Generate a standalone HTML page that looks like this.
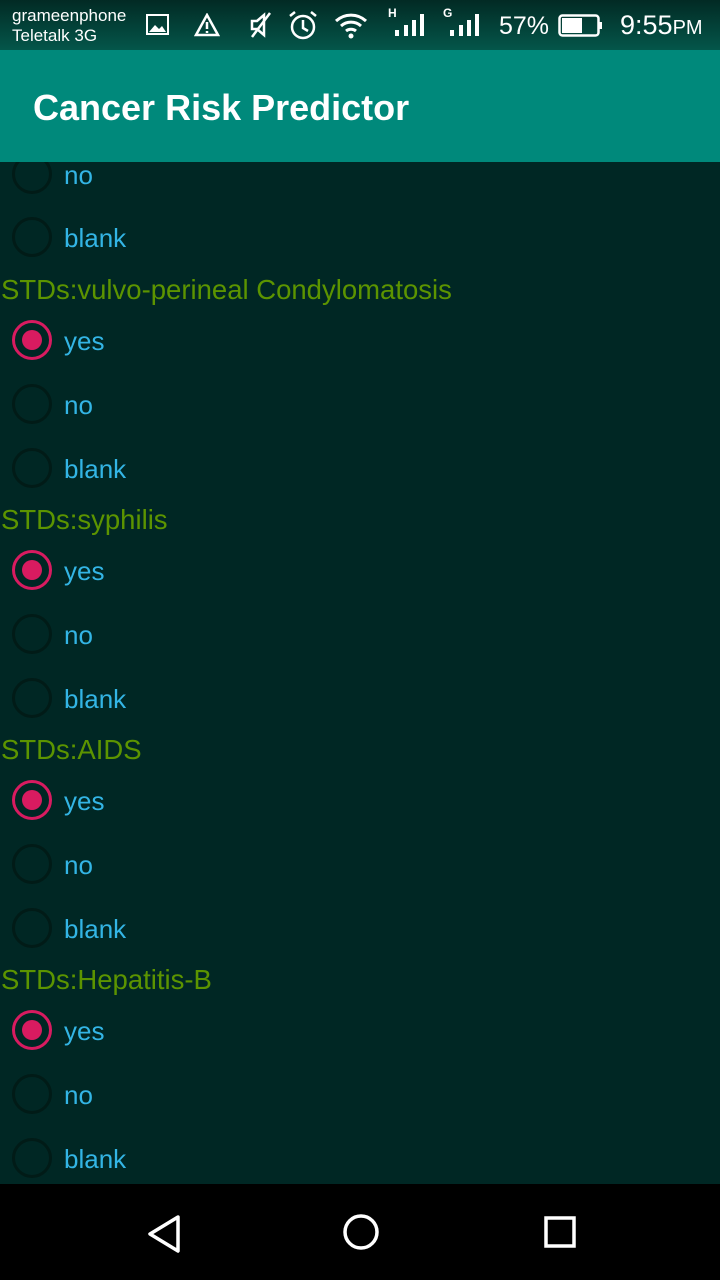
<!DOCTYPE html><html><head><style>
body{margin:0;width:720px;height:1280px;background:#002724;font-family:"Liberation Sans",sans-serif;position:relative;overflow:hidden}
.sb{position:absolute;top:0;left:0;width:720px;height:50px;background:linear-gradient(#022a24,#04564a);color:#fff}
.ab{position:absolute;top:50px;left:0;width:720px;height:112px;background:#00897b;color:#fff;font-size:36px;font-weight:bold}
.ab span{position:absolute;left:33px;top:37px}
.r{position:absolute;left:0;height:40px;width:720px}
.c{position:absolute;left:12px;top:0;width:34px;height:34px;border:3px solid #011b17;border-radius:50%}
.c.on{border-color:#d81b60}
.c.on::after{content:"";position:absolute;left:7px;top:7px;width:20px;height:20px;border-radius:50%;background:#d81b60}
.t{position:absolute;left:64px;top:6px;font-size:26px;color:#33b5e5}
.h{position:absolute;left:1px;font-size:27.5px;color:#5c9400}
.nav{position:absolute;top:1184px;left:0;width:720px;height:96px;background:#000}
</style></head><body>
<div class="sb">
<div style="position:absolute;left:12px;top:6px;font-size:17px;line-height:20px">grameenphone<br>Teletalk 3G</div>
<svg style="position:absolute;left:146px;top:14px" width="24" height="22"><rect x="1" y="1" width="21" height="19" fill="none" stroke="#fff" stroke-width="2"/><path d="M3 18 L9 11 L13 15 L16 12 L20 18Z" fill="#fff"/></svg>
<svg style="position:absolute;left:194px;top:13px" width="26" height="24"><path d="M13 2 L24 22 H2Z" fill="none" stroke="#fff" stroke-width="2.5"/><path d="M13 9v7M13 18v2" stroke="#fff" stroke-width="2.5"/></svg>
<svg style="position:absolute;left:248px;top:11px" width="26" height="28"><path d="M4 10h5l7-6v20l-7-6H4z" fill="none" stroke="#fff" stroke-width="2.5"/><path d="M22 2L4 26" stroke="#fff" stroke-width="2.5"/></svg>
<svg style="position:absolute;left:287px;top:9px" width="32" height="32"><circle cx="16" cy="18" r="11" fill="none" stroke="#fff" stroke-width="2.5"/><path d="M16 11v8l5 3M3 7l5-4M29 7l-5-4" stroke="#fff" stroke-width="2.5" fill="none"/></svg>
<svg style="position:absolute;left:334px;top:12px" width="34" height="28"><path d="M2 9a22 22 0 0 1 30 0M7 14a15 15 0 0 1 20 0M12 19a8 8 0 0 1 10 0" stroke="#fff" stroke-width="3" fill="none"/><circle cx="17" cy="24" r="2.5" fill="#fff"/></svg>
<div style="position:absolute;left:388px;top:6px;font-size:12px;font-weight:bold">H</div>
<svg style="position:absolute;left:395px;top:14px" width="32" height="24"><rect x="0" y="16" width="4" height="6" fill="#fff"/><rect x="9" y="11" width="4" height="11" fill="#fff"/><rect x="17" y="6" width="4" height="16" fill="#fff"/><rect x="25" y="0" width="4" height="22" fill="#fff"/></svg>
<div style="position:absolute;left:443px;top:6px;font-size:12px;font-weight:bold">G</div>
<svg style="position:absolute;left:450px;top:14px" width="32" height="24"><rect x="0" y="16" width="4" height="6" fill="#fff"/><rect x="9" y="11" width="4" height="11" fill="#fff"/><rect x="17" y="6" width="4" height="16" fill="#fff"/><rect x="25" y="0" width="4" height="22" fill="#fff"/></svg>
<div style="position:absolute;left:499px;top:12px;font-size:25px">57%</div>
<svg style="position:absolute;left:558px;top:14px" width="46" height="24"><rect x="1.5" y="1.5" width="39" height="20" rx="3" fill="none" stroke="#fff" stroke-width="2.5"/><rect x="4" y="4" width="20" height="15" fill="#fff"/><rect x="41" y="8" width="3" height="7" fill="#fff"/></svg>
<div style="position:absolute;left:620px;top:10px;font-size:27px">9:55<span style="font-size:20px">PM</span></div>
</div>
<div class="ab"><span>Cancer Risk Predictor</span></div>
<div id="c"></div>
<div class="nav">
<svg style="position:absolute;left:146px;top:30px" width="36" height="40"><path d="M32 3L4 20L32 37Z" fill="none" stroke="#fff" stroke-width="3.5" stroke-linejoin="round"/></svg>
<svg style="position:absolute;left:342px;top:29px" width="38" height="38"><circle cx="19" cy="19" r="16" fill="none" stroke="#fff" stroke-width="3.5"/></svg>
<svg style="position:absolute;left:543px;top:31px" width="34" height="34"><rect x="3" y="3" width="28" height="28" fill="none" stroke="#fff" stroke-width="3.5"/></svg>
</div>
<script>
var h='';
function row(y,t,on){h+='<div class="r" style="top:'+(y-20)+'px"><div class="c'+(on?' on':'')+'"></div><div class="t">'+t+'</div></div>';}
row(174,'no');row(237,'blank');
var hd=['STDs:vulvo-perineal Condylomatosis','STDs:syphilis','STDs:AIDS','STDs:Hepatitis-B'];
for(var i=0;i<4;i++){var b=289+230*i;h+='<div class="h" style="top:'+(b-15)+'px">'+hd[i]+'</div>';row(b+51,'yes',1);row(b+115,'no');row(b+179,'blank');}
document.getElementById('c').outerHTML='<div style="position:absolute;top:0;left:0;width:720px;height:1184px;overflow:hidden;clip-path:inset(162px 0 0 0)">'+h+'</div>';
</script>
</body></html>
